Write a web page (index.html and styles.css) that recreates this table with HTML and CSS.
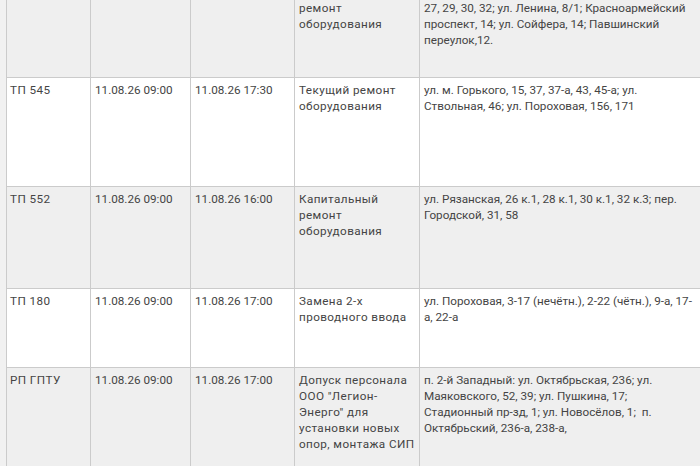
FILE: index.html
```html
<!DOCTYPE html>
<html lang="ru">
<head>
<meta charset="utf-8">
<title>Отключения</title>
<link rel="stylesheet" href="styles.css">
</head>
<body>
<table class="grid">
  <colgroup>
    <col class="c1"><col class="c2"><col class="c3"><col class="c4"><col class="c5">
  </colgroup>
  <tbody>
    <tr class="gray r1">
      <td>ТП 530</td>
      <td>11.08.26 09:00</td>
      <td>11.08.26 17:00</td>
      <td>Капитальный ремонт оборудования</td>
      <td>ул. Комсомольская, 21, 23, 25; ул. Мира, 25,<br>27, 29, 30, 32; ул. Ленина, 8/1; Красноармейский проспект, 14; ул. Сойфера, 14; Павшинский переулок,12.</td>
    </tr>
    <tr class="r2">
      <td>ТП 545</td>
      <td>11.08.26 09:00</td>
      <td>11.08.26 17:30</td>
      <td>Текущий ремонт оборудования</td>
      <td>ул. м. Горького, 15, 37, 37-а, 43, 45-а; ул. Ствольная, 46; ул. Пороховая, 156, 171</td>
    </tr>
    <tr class="gray r3">
      <td>ТП 552</td>
      <td>11.08.26 09:00</td>
      <td>11.08.26 16:00</td>
      <td>Капитальный ремонт оборудования</td>
      <td>ул. Рязанская, 26 к.1, 28 к.1, 30 к.1, 32 к.3; пер. Городской, 31, 58</td>
    </tr>
    <tr class="r4">
      <td>ТП 180</td>
      <td>11.08.26 09:00</td>
      <td>11.08.26 17:00</td>
      <td>Замена 2-х проводного ввода</td>
      <td>ул. Пороховая, 3-17 (нечётн.), 2-22 (чётн.), 9-а, 17-а, 22-а</td>
    </tr>
    <tr class="gray r5">
      <td>РП ГПТУ</td>
      <td>11.08.26 09:00</td>
      <td>11.08.26 17:00</td>
      <td>Допуск персонала ООО "Легион-Энерго" для установки новых опор, монтажа СИП</td>
      <td>п. 2-й Западный: ул. Октябрьская, 236; ул. Маяковского, 52, 39; ул. Пушкина, 17; Стадионный пр-зд, 1; ул. Новосёлов, 1;&nbsp; п. Октябрьский, 236-а, 238-а,</td>
    </tr>
  </tbody>
</table>
</body>
</html>
```
FILE: styles.css
```css
html, body {
  margin: 0;
  padding: 0;
  background: #f1f1f1;
  overflow: hidden;
  width: 700px;
  height: 466px;
}

.grid {
  margin: -21px 0 0 6px;
  border-collapse: collapse;
  table-layout: fixed;
  width: 694px;
  font-family: Roboto, "Liberation Sans", sans-serif;
  font-size: 11.7px;
  line-height: 16px;
  color: #444444;
}

.c1 { width: 84px; }
.c2 { width: 100px; }
.c3 { width: 104px; }
.c4 { width: 125px; }
.c5 { width: 281px; }

.grid td {
  border: 1px solid #cbcbcb;
  padding: 4px 4px 4px 3px;
  vertical-align: top;
  background: #ffffff;
}

.grid td:nth-child(n+2) { padding-left: 4px; }

.grid td:nth-child(1),
.grid td:nth-child(4) { letter-spacing: 0.42px; }

.grid tr.gray td { background: #efefef; }

.r1 { height: 98px; }
.r2 { height: 109px; }
.r3 { height: 102px; }
.r4 { height: 79px; }
.r5 { height: 130px; }
```
